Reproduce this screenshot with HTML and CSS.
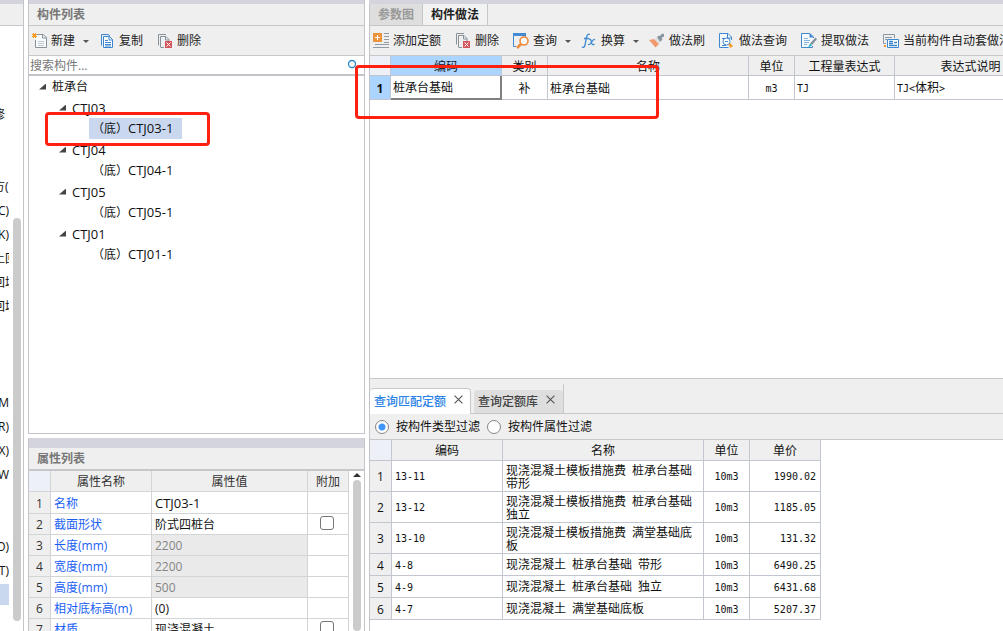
FILE: index.html
```html
<!DOCTYPE html>
<html lang="zh-CN">
<head>
<meta charset="utf-8">
<title>构件做法</title>
<link rel="stylesheet" href="styles.css">
</head>
<body>
<div class="workspace">
  <aside class="nav">
    <div class="strip"></div>
    <div class="nav-head"></div>
    <div class="nav-body">
      <ul class="nav-list">
        <li>修</li><li></li><li></li><li>方(</li><li class="end">C)</li><li class="end">K)</li><li>土回</li><li>回填</li><li>回填</li><li></li><li></li><li></li><li class="end">M</li><li class="end">R)</li><li class="end">X)</li><li class="end">W</li><li></li><li></li><li class="end">O)</li><li class="end">T)</li><li class="current"></li>
      </ul>
      <div class="nav-track"><div class="thumb"></div></div>
    </div>
  </aside>

  <div class="left">
    <section class="panel components">
      <div class="strip"></div>
      <h2 class="title">构件列表</h2>
      <div class="toolbar">
        <button class="tool"><svg class="icon" viewBox="0 0 16 16"><path d="M6 1.500h6l3.500 3V14.500H4.500V7" fill="#f8fafb" stroke="#87929b"/><path d="M11.500 1.500v3.500h4" fill="none" stroke="#87929b"/><path d="M7 8.500h6M7 10.500h6M7 12.500h6" stroke="#c2c9ce"/><path d="M2 0h1v1h1V0h1v1h1v1H5v1h1v1H5v1H4V4H3v1H2V4H1V3h1V2H1V1h1z" fill="#f39a27"/></svg>新建</button><button class="caret" aria-label="新建选项"></button>
        <button class="tool"><svg class="icon" viewBox="0 0 16 16"><path d="M2.500 12.500V1.500H9L11 3" fill="none" stroke="#3d86cf"/><path d="M4.500 3.500h6l3 3v8h-9z" fill="#fff" stroke="#3d86cf"/><path d="M10 3.500V7h4M6 7.500h3M6 9.500h6M6 11.500h6M6 13h6" fill="none" stroke="#3d86cf"/></svg>复制</button>
        <button class="tool"><svg class="icon" viewBox="0 0 16 16"><path d="M1.500 12.500v-11H9M3.500 14V3.500H9l3 3V8M8.500 4v3H12M3.500 14.500H7" fill="none" stroke="#87929b"/><path d="M8 8h7v7H8z" fill="#d4545b"/><path d="M9.500 9.500l4 4m0-4l-4 4" stroke="#fff"/></svg>删除</button>
      </div>
      <label class="search"><input type="search" placeholder="搜索构件..." aria-label="搜索构件"><svg class="glass" viewBox="0 0 12 12"><circle cx="5" cy="5" r="3.500" fill="none" stroke="#278ac2" stroke-width="1.300"/><path d="M8 8l2 2" stroke="#278ac2"/></svg></label>
      <ul class="tree">
        <li class="node root"><i class="arrow"></i>桩承台</li>
        <li class="node group"><i class="arrow"></i><span class="code">CTJ03</span></li>
        <li class="node leaf selected"><span>（底）<b class="code">CTJ03-1</b></span></li>
        <li class="node group"><i class="arrow"></i><span class="code">CTJ04</span></li>
        <li class="node leaf"><span>（底）<b class="code">CTJ04-1</b></span></li>
        <li class="node group"><i class="arrow"></i><span class="code">CTJ05</span></li>
        <li class="node leaf"><span>（底）<b class="code">CTJ05-1</b></span></li>
        <li class="node group"><i class="arrow"></i><span class="code">CTJ01</span></li>
        <li class="node leaf"><span>（底）<b class="code">CTJ01-1</b></span></li>
      </ul>
    </section>

    <section class="panel properties">
      <div class="strip tall"></div>
      <h2 class="title thick">属性列表</h2>
      <div class="prop-body">
        <table class="props">
          <colgroup><col class="p-num"><col class="p-name"><col><col class="p-add"></colgroup>
          <thead><tr><th class="corner"></th><th>属性名称</th><th>属性值</th><th>附加</th></tr></thead>
          <tbody>
            <tr><th>1</th><td class="key">名称</td><td><span class="code">CTJ03-1</span></td><td></td></tr>
            <tr><th>2</th><td class="key">截面形状</td><td>阶式四桩台</td><td class="check"><input type="checkbox" aria-label="附加 截面形状"></td></tr>
            <tr><th>3</th><td class="key">长度(mm)</td><td class="off">2200</td><td></td></tr>
            <tr><th>4</th><td class="key">宽度(mm)</td><td class="off">2200</td><td></td></tr>
            <tr><th>5</th><td class="key">高度(mm)</td><td class="off">500</td><td></td></tr>
            <tr><th>6</th><td class="key">相对底标高(m)</td><td>(0)</td><td></td></tr>
            <tr><th>7</th><td class="key">材质</td><td>现浇混凝土</td><td class="check"><input type="checkbox" aria-label="附加 材质"></td></tr>
          </tbody>
        </table>
        <div class="prop-track"><i class="up"></i><div class="thumb"></div></div>
      </div>
    </section>
  </div>

  <main class="right">
    <div class="strip"></div>
    <div class="tabs">
      <button class="tab">参数图</button><button class="tab active">构件做法</button>
    </div>
    <div class="toolbar">
      <button class="tool"><svg class="icon" viewBox="0 0 16 16"><path d="M0 0h9v9H0z" fill="#ed923d"/><path d="M4.500 2v5M2 4.500h5" stroke="#fff"/><path d="M11 .5h5M11 3.500h5M11 6.500h5M11 9.500h5M2 11.500h14M0 14.500h16" stroke="#8f9ba3"/></svg>添加定额</button>
      <button class="tool"><svg class="icon" viewBox="0 0 16 16"><path d="M1.500 11.500v-11H9M3.500 14V2.500H9l3 3V8M8.500 3v3H12M3.500 14.500H7" fill="none" stroke="#87929b"/><path d="M8 8h7v7H8z" fill="#d4545b"/><path d="M9.500 9.500l4 4m0-4l-4 4" stroke="#fff"/></svg>删除</button>
      <button class="tool"><svg class="icon" viewBox="0 0 16 16"><path d="M0 0h13v3H0z" fill="#438ad3"/><path d="M.500 3v10.500H3M12.500 3v1" fill="none" stroke="#438ad3"/><circle cx="11" cy="8" r="4" fill="#f7f7f7" stroke="#ed8a3b" stroke-width="1.600"/><path d="M8 11l-4 4" stroke="#ed8a3b" stroke-width="2.500"/></svg>查询</button><button class="caret" aria-label="查询选项"></button>
      <button class="tool"><svg class="icon" viewBox="0 0 16 16"><path d="M9 1.500C7 .3 6 2 5.500 4.500L4 12c-.4 2-1.500 3-3 2M3 5.500h5M8 6.500c2-1 2 1 2.500 3s1.200 3 3 1.500M14 6.500c-2-.5-3 2-4 3.500s-1.500 2-3 1.500" fill="none" stroke="#408bd0" stroke-width="1.300"/></svg>换算</button><button class="caret" aria-label="换算选项"></button>
      <button class="tool"><svg class="icon" viewBox="0 0 16 16"><path d="M8 4l2-1.500 1 .5 2-2.500 2 .5v2.500L12.500 5l1 1.500L11 9z" fill="#87959f"/><path d="M7 4.500l4.500 4.500-1.500 1.500L5.500 6z" fill="#d9e0e4"/><path d="M0 7l5-1 5 5-3.500 3.500z" fill="#f29a6d"/></svg>做法刷</button>
      <button class="tool"><svg class="icon" viewBox="0 0 16 16"><path d="M12.500 7V4L9 .5H.5v14h9M8.500 1v4h4" fill="#f5f9fc" stroke="#3f88d0"/><circle cx="7.500" cy="8.500" r="3.500" fill="#fff" stroke="#3f88d0"/><path d="M3 5.500h3M3 12.500h4M6 8.500h3" stroke="#3f88d0"/><path d="M11 10l3 3-2.500 2-2-3z" fill="#f39a27"/></svg>做法查询</button>
      <button class="tool"><svg class="icon" viewBox="0 0 16 16"><path d="M12.500 5V4L9 .5H.500v14h11V13" fill="#f7fafc" stroke="#3f88d0"/><path d="M8.500 0v4.500h4z" fill="#3f88d0"/><path d="M3 5.500h4M3 7.500h6M3 9.500h5M3 11.500h3" stroke="#87b4df"/><path d="M14.500 4.500l1.500 1.500-5 6-2-1.500z" fill="#85919a"/><path d="M9 10.500l2 2-4 2z" fill="#24afcf"/></svg>提取做法</button>
      <button class="tool"><svg class="icon" viewBox="0 0 16 16"><path d="M3 10.500H.500v-9h11V5M2 4.500h7M2 6.500h2" fill="none" stroke="#8b98a1"/><path d="M4.500 6.500h11v8h-11z" fill="#fff" stroke="#3f88d0"/><path d="M6 8.500h4M6 10.500h4M6 12.500h8M11 9.500h3" stroke="#3f88d0" stroke-width="1.400"/><path d="M1 12h2v2H1z" fill="#ed923d"/></svg>当前构件自动套做法</button>
    </div>
    <div class="sheet">
      <table class="grid methods">
        <colgroup><col class="m-num"><col class="m-code"><col class="m-kind"><col class="m-name"><col class="m-unit"><col class="m-expr"><col class="m-desc"></colgroup>
        <thead><tr><th class="corner"></th><th class="hot">编码</th><th>类别</th><th>名称</th><th>单位</th><th>工程量表达式</th><th>表达式说明</th></tr></thead>
        <tbody><tr><th class="hot">1</th><td class="editing">桩承台基础</td><td class="center">补</td><td>桩承台基础</td><td class="center mono">m3</td><td class="mono">TJ</td><td><span class="mono">TJ&lt;</span>体积<span class="mono">&gt;</span></td></tr></tbody>
      </table>
    </div>
    <section class="query">
      <div class="query-tabs">
        <div class="qtab active"><button>查询匹配定额</button><button class="close" aria-label="关闭查询匹配定额"><svg viewBox="0 0 8 8"><path d="M.5.5l7 7m0-7l-7 7" stroke="#555"/></svg></button></div>
        <div class="qtab"><button>查询定额库</button><button class="close" aria-label="关闭查询定额库"><svg viewBox="0 0 8 8"><path d="M.5.5l7 7m0-7l-7 7" stroke="#555"/></svg></button></div>
        <i class="divider"></i>
      </div>
      <div class="filters">
        <label><input type="radio" name="filter" checked>按构件类型过滤</label>
        <label><input type="radio" name="filter">按构件属性过滤</label>
      </div>
      <div class="results">
        <table class="grid quotas">
          <colgroup><col class="q-num"><col class="m-code"><col class="q-name"><col class="m-unit"><col class="q-price"></colgroup>
          <thead><tr><th class="corner"></th><th>编码</th><th>名称</th><th>单位</th><th>单价</th></tr></thead>
          <tbody>
            <tr class="double"><th>1</th><td class="mono">13-11</td><td>现浇混凝土模板措施费<span class="mono"> </span>桩承台基础<span class="mono"> </span>带形</td><td class="center mono">10m3</td><td class="price mono">1990.02</td></tr>
            <tr class="double"><th>2</th><td class="mono">13-12</td><td>现浇混凝土模板措施费<span class="mono"> </span>桩承台基础<span class="mono"> </span>独立</td><td class="center mono">10m3</td><td class="price mono">1185.05</td></tr>
            <tr class="double"><th>3</th><td class="mono">13-10</td><td>现浇混凝土模板措施费<span class="mono"> </span>满堂基础底板</td><td class="center mono">10m3</td><td class="price mono">131.32</td></tr>
            <tr><th>4</th><td class="mono">4-8</td><td>现浇混凝土<span class="mono"> </span>桩承台基础<span class="mono"> </span>带形</td><td class="center mono">10m3</td><td class="price mono">6490.25</td></tr>
            <tr><th>5</th><td class="mono">4-9</td><td>现浇混凝土<span class="mono"> </span>桩承台基础<span class="mono"> </span>独立</td><td class="center mono">10m3</td><td class="price mono">6431.68</td></tr>
            <tr><th>6</th><td class="mono">4-7</td><td>现浇混凝土<span class="mono"> </span>满堂基础底板</td><td class="center mono">10m3</td><td class="price mono">5207.37</td></tr>
          </tbody>
        </table>
      </div>
    </section>
    <div class="mark mark-row"></div>
  </main>
</div>
</body>
</html>
```

FILE: styles.css
```css
* { box-sizing: border-box; }
body {
  margin: 0;
  overflow: hidden;
  background: #fff;
  color: #111;
  font: 12px/20px "Open Sans", "Noto Sans CJK SC", sans-serif;
}
ul { list-style: none; margin: 0; padding: 0; }
button {
  border: 0;
  padding: 0;
  background: none;
  color: inherit;
  font: inherit;
  white-space: nowrap;
}
table { border-collapse: separate; border-spacing: 0; table-layout: fixed; }
th, td { padding: 2px 0 0; font-weight: 400; overflow: hidden; white-space: nowrap; }
.code { font-size: 13px; font-weight: 400; }

.workspace {
  display: grid;
  grid-template-columns: 24px minmax(280px, 337fr) minmax(0, 634fr);
  column-gap: 4px;
  height: 100vh;
}
.strip { height: 4px; flex: none; background: #d4d5dc; }
.strip.tall { height: 10px; }
.thumb { flex: 1; width: 8px; border-radius: 4px; background: #cbcbcb; }

/* Navigation strip */
.nav { display: flex; flex-direction: column; min-height: 0; border-right: 1px solid #c3c4c9; }
.nav-head { flex: none; height: 22px; background: #efefef; border-bottom: 1px solid #c6c7ca; }
.nav-body { flex: 1; display: flex; gap: 4px; min-height: 0; }
.nav-list { width: 9px; padding-top: 77px; overflow: hidden; }
.nav-list li { height: 24px; line-height: 24px; text-indent: -7px; white-space: nowrap; overflow: hidden; }
.nav-list .end { display: flex; justify-content: flex-end; text-indent: 0; }
.nav-list .current { height: 21px; margin-top: 1px; background: #c9d8ef; }
.nav-track { display: flex; padding: 192px 0 10px; }

/* Panels */
.left { display: grid; grid-template-rows: minmax(0, 434fr) minmax(0, 193fr); row-gap: 4px; min-height: 0; }
.panel { display: flex; flex-direction: column; min-height: 0; border: solid #c3c4c9; border-width: 0 1px; }
.components { border-bottom-width: 1px; }
.title {
  flex: none;
  margin: 0;
  padding-left: 8px;
  height: 22px;
  background: #efefef;
  border-bottom: 1px solid #c6c7ca;
  color: #777;
  font-size: 12px;
  font-weight: 700;
  line-height: 21px;
}
.title.thick { height: 23px; border-bottom-width: 2px; }
.toolbar {
  flex: none;
  display: flex;
  align-items: center;
  gap: 14px;
  height: 30px;
  padding-left: 2px;
  overflow: hidden;
  background: #efefef;
  border-bottom: 1px solid #c6c7ca;
  color: #222;
}
.right > .toolbar { padding-left: 3px; }
.tool { display: flex; flex: none; align-items: center; gap: 4px; }
.icon { width: 16px; height: 16px; }
.caret {
  flex: none;
  margin: 2px -4px 0 -6px;
  border: solid transparent;
  border-width: 3px 3px 0;
  border-top-color: #555;
}
.search { flex: none; display: flex; align-items: center; height: 20px; padding-right: 5px; border-bottom: 2px solid #c3c4c9; }
.search input { flex: 1; min-width: 0; border: 0; padding: 2px 1px 0; outline: 0; background: none; font: inherit; appearance: none; }
.search input::placeholder { color: #777; opacity: 1; }
.glass { width: 12px; height: 12px; }

/* Component tree */
.node { display: flex; align-items: center; height: 21px; }
.root { padding-left: 10px; }
.group { padding-left: 30px; }
.leaf { padding-left: 60px; }
.leaf > span { position: relative; padding: 0 9px 0 3px; line-height: 21px; }
.selected > span { background: #c9d8ef; }
.arrow { width: 7px; height: 6px; margin-right: 6px; background: #444; clip-path: polygon(100% 0, 100% 100%, 0 100%); }
.mark, .selected > span::after {
  position: absolute;
  border: 3px solid #ff2010;
  border-radius: 4px;
  pointer-events: none;
}
.selected > span::after { content: ""; inset: -6px -28px -7px -44px; }
.mark-row { left: -14px; top: 65px; width: 304px; height: 54px; }

/* Property list */
.prop-body { flex: 1; display: flex; min-height: 0; overflow: hidden; }
.props { flex: 1; align-self: flex-start; min-width: 0; }
.p-num { width: 22px; }
.p-name { width: 101px; }
.p-add { width: 41px; }
.props th, .props td { height: 21px; line-height: 18px; border: solid #d3d4d5; border-width: 0 1px 1px 0; }
.props th { background: #efefef; color: #333; }
.props td { padding-left: 3px; }
.props .corner, .grid .corner { background: #edf1f7; }
.props .key { color: #1a5ff5; }
.props .off { background: #eaeaea; color: #858585; }
.props .check { padding: 0; text-align: center; }
.check input {
  appearance: none;
  display: block;
  width: 14px;
  height: 14px;
  margin: 0 auto 2px 12px;
  border: 1px solid #777;
  border-radius: 3px;
  background: #fff;
}
.prop-track { width: 15px; display: flex; flex-direction: column; align-items: center; gap: 3px; padding-top: 2px; }
.up { border: solid transparent; border-width: 0 4px 4px; border-bottom-color: #333; }

/* Method editor */
.right { position: relative; display: flex; flex-direction: column; min-width: 0; min-height: 0; }
.tabs, .right > .toolbar, .sheet, .query { border-left: 1px solid #c3c4c9; }
.tabs { flex: none; display: flex; height: 22px; background: #efefef; border-bottom: 1px solid #c6c7ca; }
.tab { padding: 0 8px; background: #dedede; border-right: 1px solid #c6c7ca; color: #999; font-weight: 700; }
.tab.active { background: #f2f2f2; color: #222; }
.sheet { flex: 323 1 0; min-height: 0; overflow: hidden; border-bottom: 1px solid #c6c7ca; }
.m-num { width: 21px; }
.q-num { width: 22px; }
.m-code { width: 111px; }
.m-kind { width: 46px; }
.m-name, .q-name { width: 201px; }
.m-unit { width: 46px; }
.m-expr { width: 100px; }
.m-desc { width: 152px; }
.q-price { width: 71px; }
.methods { width: 677px; }
.quotas { width: 451px; }
.grid th, .grid td { border: solid #c2c7cf; border-width: 0 1px 1px 0; }
.grid th { height: 20px; line-height: 17px; background: #efefef; }
.grid .hot { background: #abd5ff; }
.grid td { padding-left: 2px; }
.methods td { height: 23px; line-height: 20px; }
.methods tbody .hot { font-weight: 700; }
.grid .center { padding-left: 0; text-align: center; }
.grid .editing { border-color: #808080; border-width: 0 2px 2px 0; }
.mono { font-family: "DejaVu Sans Mono", monospace; font-size: 10px; }

/* Quota query */
.query { flex: 252 1 0; min-height: 0; display: flex; flex-direction: column; overflow: hidden; background: #fff; }
.query-tabs { flex: none; display: flex; align-items: flex-end; height: 35px; background: #efefef; border-bottom: 1px solid #c6c7ca; }
.qtab { display: flex; align-items: center; gap: 8px; height: 23px; margin-left: 3px; padding: 0 8px 0 4px; background: #dedede; border-radius: 4px 4px 0 0; color: #444; font-weight: 500; }
.qtab.active { height: 26px; margin: 0 0 -1px; padding-right: 7px; background: #fff; border: solid #c6c7ca; border-width: 1px 1px 0 0; color: #2b83e6; }
.close { width: 9px; margin-bottom: 4px; line-height: 0; }
.close svg { width: 9px; height: 9px; }
.divider { width: 1px; height: 29px; background: #c6c7ca; }
.filters { flex: none; display: flex; align-items: center; gap: 7px; height: 26px; padding-left: 5px; background: #efefef; border-bottom: 1px solid #c6c7ca; }
.filters label { display: flex; align-items: center; gap: 7px; }
.filters input {
  appearance: none;
  width: 14px;
  height: 14px;
  margin: 0;
  border: 1px solid #858585;
  border-radius: 50%;
  background: #fff;
}
.filters input:checked { background: radial-gradient(circle, #4096f7 3px, #fff 4px); }
.results { flex: 1; min-height: 0; overflow: hidden; }
.quotas thead th { height: 21px; line-height: 18px; }
.quotas tbody th, .quotas td { height: 22px; line-height: 18px; }
.quotas td { padding-left: 3px; }
.quotas .double th, .quotas .double td { height: 31px; }
.quotas .double td { padding-right: 4px; line-height: 12px; white-space: normal; }
.quotas .double .center { padding-right: 0; }
.grid .price { padding-right: 4px; text-align: right; }
```
